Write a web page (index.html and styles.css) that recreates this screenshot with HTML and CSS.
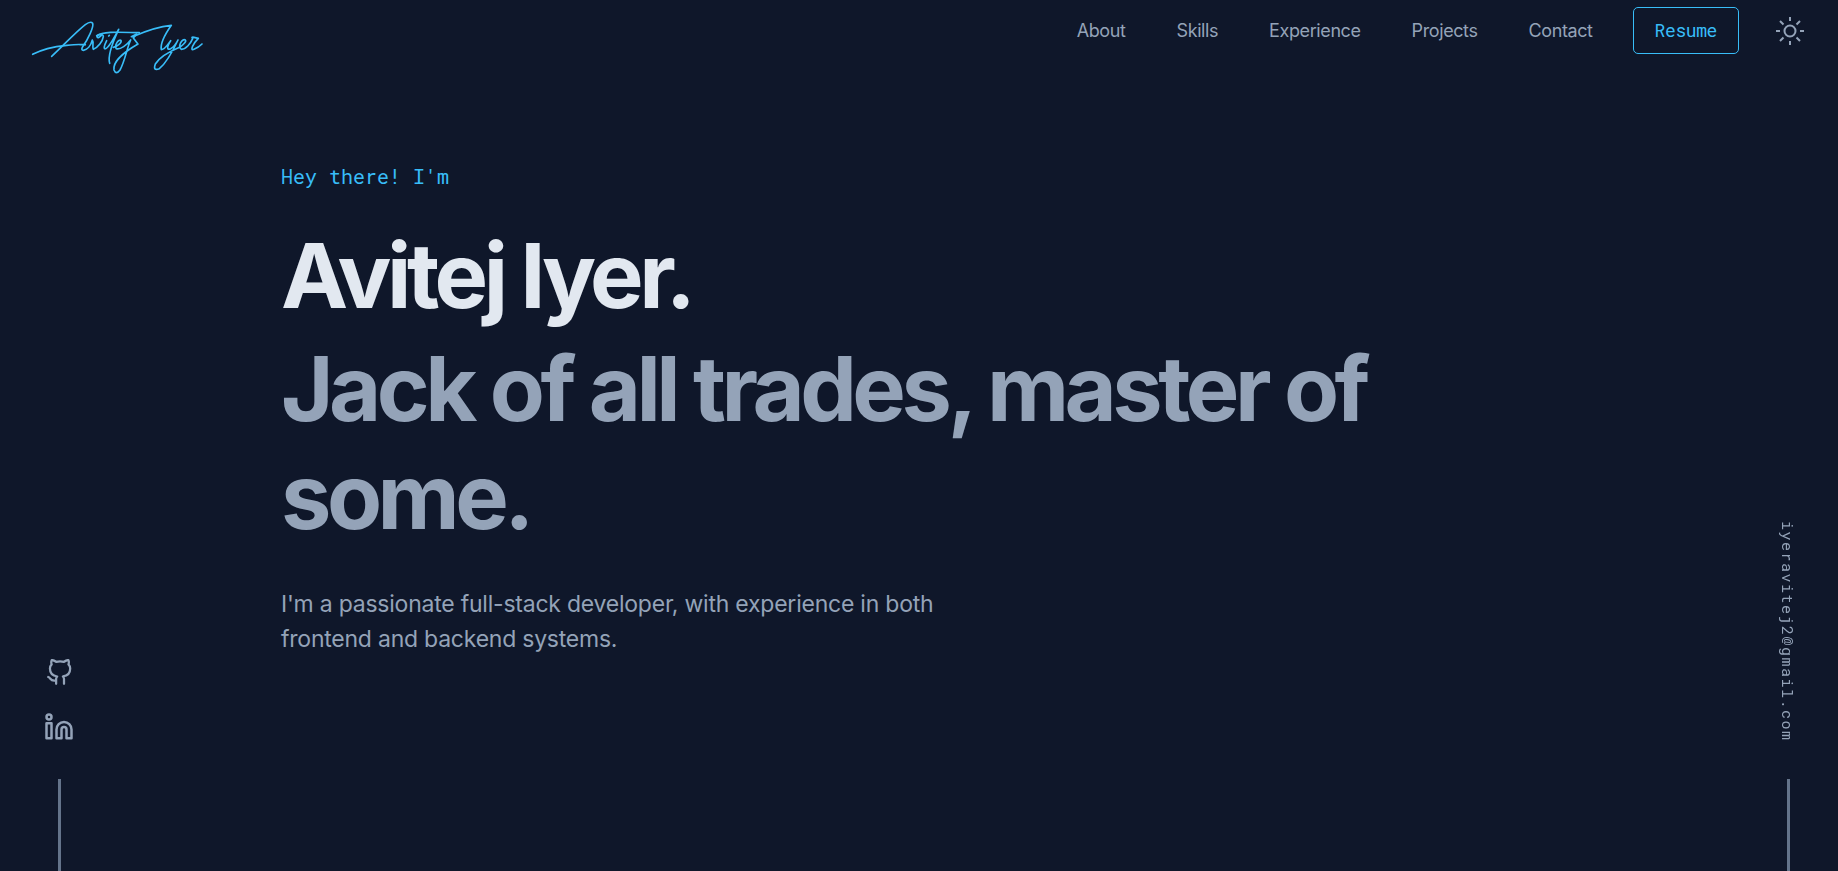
FILE: index.html
```html
<!DOCTYPE html>
<html lang="en">
<head>
<meta charset="utf-8">
<title>Avitej Iyer</title>
<link rel="stylesheet" href="styles.css">
</head>
<body>
<header class="topbar">
  <a class="logo" href="#" aria-label="Avitej Iyer, home">
    <svg class="logo-mark" viewBox="0 0 600 225" aria-hidden="true">
      <path d="M38 133C62 120 100 110 140 106S172 104 196 104"/>
      <path d="M95 139C125 112 165 68 196 44Q212 32 218 40C222 50 204 88 187 112Q183 121 190 121C202 119 213 106 217 90C222 96 216 112 220 118C234 112 248 94 250 80C250 70 234 72 231 80Q234 88 246 74"/>
      <path d="M260 92C252 108 250 118 257 116C268 112 282 84 296 58C282 88 262 138 269 160"/>
      <path d="M266 78L268 76"/>
      <path d="M230 77C248 64 290 66 358 68"/>
      <path d="M280 112C292 110 306 98 303 91C296 86 282 106 289 116C300 120 322 104 332 90C320 116 316 150 300 180Q288 196 282 180C278 156 312 126 354 102"/>
      <path d="M334 80L350 72L340 84L352 100"/>
      <path d="M338 80C370 66 410 50 454 46C440 66 420 100 424 119C436 118 444 102 452 92C440 110 440 122 452 116C462 110 470 98 474 90C460 120 440 158 418 176Q398 184 406 162C420 138 458 120 482 110C492 102 500 94 496 90C486 84 472 110 484 118C498 118 512 100 518 86Q512 80 522 82L535 85C520 100 508 124 522 118Q536 112 546 102"/>
    </svg>
  </a>
  <nav class="nav">
    <a class="nav-link" href="#about">About</a>
    <a class="nav-link" href="#skills">Skills</a>
    <a class="nav-link" href="#experience">Experience</a>
    <a class="nav-link" href="#projects">Projects</a>
    <a class="nav-link" href="#contact">Contact</a>
    <a class="resume" href="#resume">Resume</a>
    <button class="theme" type="button" aria-label="Toggle theme">
      <svg class="theme-icon" viewBox="0 0 30 30" aria-hidden="true">
        <circle cx="15" cy="15" r="5.500"/>
        <path d="M15 1v4M15 25v4M1 15h4M25 15h4M5 5l3.500 3.500M21.500 21.500l3.500 3.500M5 25l3.500-3.500M21.500 8.500l3.500-3.500"/>
      </svg>
    </button>
  </nav>
</header>
<main class="hero">
  <p class="greeting">Hey there! I'm</p>
  <h1 class="name">Avitej Iyer.</h1>
  <h2 class="tagline">Jack of all trades, master of some.</h2>
  <p class="intro">I'm a passionate full-stack developer, with experience in both frontend and backend systems.</p>
</main>
<aside class="rail rail-left">
  <a class="social" href="#github" aria-label="GitHub">
    <svg class="github-icon" viewBox="0 0 24 24" aria-hidden="true"><path d="M9 19c-5 1.500-5-2.500-7-3m14 6v-3.870a3.370 3.370 0 0 0-.940-2.610c3.140-.350 6.440-1.540 6.440-7A5.440 5.440 0 0 0 20 4.770 5.070 5.070 0 0 0 19.910 1S18.730.650 16 2.480a13.380 13.380 0 0 0-7 0C6.270.650 5.090 1 5.090 1A5.070 5.070 0 0 0 5 4.770a5.440 5.440 0 0 0-1.500 3.780c0 5.420 3.300 6.610 6.440 7A3.370 3.370 0 0 0 9 18.130V22"/></svg>
  </a>
  <a class="social" href="#linkedin" aria-label="LinkedIn">
    <svg class="linkedin-icon" viewBox="0 0 24 24" aria-hidden="true"><path d="M16 8a6 6 0 0 1 6 6v7h-4v-7a2 2 0 0 0-4 0v7h-4v-7a6 6 0 0 1 6-6zM2 9h4v12H2z"/><circle cx="4" cy="4" r="2"/></svg>
  </a>
  <span class="line"></span>
</aside>
<aside class="rail rail-right">
  <a class="email" href="mailto:iyeravitej2@gmail.com">iyeravitej2@gmail.com</a>
  <span class="line"></span>
</aside>
</body>
</html>
```
FILE: styles.css
```css
* { box-sizing: border-box; }
body {
  margin: 0;
  min-height: 100vh;
  overflow: hidden;
  background: #0f172a;
  color: #94a3b8;
  font-family: Inter, "Liberation Sans", sans-serif;
  font-optical-sizing: none;
}
a { color: inherit; text-decoration: none; }
h1, h2, p { margin: 0; }
svg { display: block; fill: none; stroke: currentColor; stroke-linecap: round; stroke-linejoin: round; }

.topbar {
  display: flex;
  justify-content: space-between;
  align-items: flex-start;
  padding: 7px 33px 0 20px;
}
.logo { color: #38bdf8; padding-top: 3px; }
.logo-mark { width: 200px; height: 75px; stroke-width: 5; }
.nav { display: flex; align-items: center; letter-spacing: -0.025em; }
.nav-link { margin-right: 51px; font-size: 18px; }
.nav-link:nth-of-type(5) { margin-right: 40px; }
.resume {
  padding: 0 21px;
  border: 1px solid #38bdf8;
  border-radius: 5px;
  color: #38bdf8;
  font: 18px/45px "Roboto Mono", "Liberation Mono", monospace;
}
.theme { margin-left: 36px; padding: 0; border: 0; background: none; color: #94a3b8; }
.theme-icon { width: 30px; height: 30px; stroke-width: 2; stroke-linecap: butt; }

.hero { max-width: 1276px; margin: 0 auto; padding-top: 77px; }
.greeting { color: #38bdf8; font: 20px/28px "Roboto Mono", "Liberation Mono", monospace; }
.name, .tagline { font-size: 90px; line-height: 108px; font-weight: 700; letter-spacing: -0.05em; }
.name { margin-top: 32px; color: #e2e8f0; }
.tagline { margin-top: 5px; }
.intro { max-width: 672px; margin-top: 36px; font-size: 23px; line-height: 35px; letter-spacing: -0.01em; }

.rail {
  position: fixed;
  bottom: 0;
  display: flex;
  flex-direction: column;
  align-items: center;
}
.rail-left { left: 44px; }
.rail-right { right: 38px; }
.social { margin-bottom: 26px; }
.github-icon { width: 27px; height: 27px; stroke-width: 2; }
.linkedin-icon { width: 30px; height: 30px; stroke-width: 2; }
.line { width: 3px; height: 92px; margin-top: 11px; background: #64748b; }
.email {
  margin-bottom: 26px;
  writing-mode: vertical-rl;
  font: 15px/24px "Roboto Mono", "Liberation Mono", monospace;
  letter-spacing: 0.1em;
}
```
